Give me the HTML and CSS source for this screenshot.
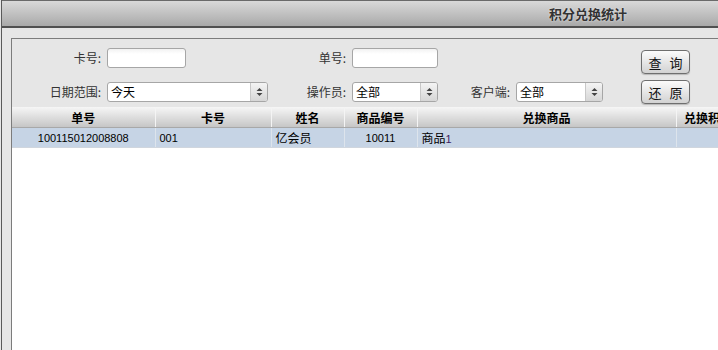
FILE: index.html
```html
<!DOCTYPE html>
<html lang="zh-CN">
<head>
    <meta charset="UTF-8">
    <title>积分兑换统计</title>
    <link rel="stylesheet" href="styles.css">
</head>
<body>
    <div class="window">
        <div class="titlebar">积分兑换统计</div>
        <div class="panel">
            <div class="search">
                <div class="fields">
                    <div class="row">
                        <label class="lbl lbl-card">卡号:</label>
                        <input type="text" class="txt txt-card">
                        <label class="lbl lbl-order">单号:</label>
                        <input type="text" class="txt txt-order">
                    </div>
                    <div class="row row-2">
                        <label class="lbl lbl-card">日期范围:</label>
                        <div class="select sel-date"><span>今天</span><span class="arrow"><svg width="7" height="10" viewBox="0 0 7 10"><path d="M3.5 1 L6.5 4 L0.5 4 Z M0.5 6 L6.5 6 L3.5 9 Z" fill="#444"/></svg></span></div>
                        <label class="lbl lbl-oper">操作员:</label>
                        <div class="select sel-oper"><span>全部</span><span class="arrow"><svg width="7" height="10" viewBox="0 0 7 10"><path d="M3.5 1 L6.5 4 L0.5 4 Z M0.5 6 L6.5 6 L3.5 9 Z" fill="#444"/></svg></span></div>
                        <label class="lbl lbl-client">客户端:</label>
                        <div class="select sel-client"><span>全部</span><span class="arrow"><svg width="7" height="10" viewBox="0 0 7 10"><path d="M3.5 1 L6.5 4 L0.5 4 Z M0.5 6 L6.5 6 L3.5 9 Z" fill="#444"/></svg></span></div>
                    </div>
                </div>
                <div class="buttons">
                    <button class="btn">查 询</button>
                    <button class="btn">还 原</button>
                </div>
            </div>
            <table class="grid">
                <colgroup>
                    <col class="c1"><col class="c2"><col class="c3"><col class="c4"><col class="c5"><col class="c6">
                </colgroup>
                <thead>
                    <tr>
                        <th>单号</th>
                        <th>卡号</th>
                        <th>姓名</th>
                        <th>商品编号</th>
                        <th>兑换商品</th>
                        <th>兑换积分</th>
                        <th></th>
                    </tr>
                </thead>
                <tbody>
                    <tr class="selected">
                        <td class="num center">100115012008808</td>
                        <td class="num">001</td>
                        <td>亿会员</td>
                        <td class="num center code">10011</td>
                        <td>商品<span class="code num">1</span></td>
                        <td></td>
                        <td></td>
                    </tr>
                </tbody>
            </table>
        </div>
    </div>
</body>
</html>
```

FILE: styles.css
```css
body {
    margin: 0;
    overflow: hidden;
    height: 350px;
    background-color: #e6e6e6;
    font-family: "Noto Sans CJK SC", "Liberation Sans", sans-serif;
    font-size: 12px;
    color: #222;
}
.window {
    width: 1172px;
    height: 350px;
    margin-left: 1px;
    border-left: 1px solid #5a5a5a;
    background-color: #e6e6e6;
}
.titlebar {
    height: 25px;
    line-height: 25px;
    border-top: 1px solid #6a6a6a;
    border-bottom: 2px solid #505050;
    background: linear-gradient(#d9d9d9, #a9a9a9);
    text-align: center;
    font-weight: bold;
    font-size: 13px;
    color: #333;
    text-shadow: 0 0 2px #eee;
}
.panel {
    margin: 10px 0 0 9px;
    width: 1150px;
    height: 312px;
    border: 1px solid #7c7c7c;
    border-bottom: none;
    background-color: #fff;
}
.search {
    display: flex;
    height: 68px;
    background-color: #e6e6e6;
    box-sizing: border-box;
    padding-top: 9px;
}
.fields {
    width: 629px;
}
.row {
    display: flex;
    align-items: center;
    height: 20px;
}
.row-2 {
    margin-top: 14px;
}
.lbl {
    box-sizing: border-box;
    text-align: right;
    padding-right: 6px;
    color: #333;
    line-height: 20px;
}
.lbl-card { width: 95px; }
.lbl-order { width: 166px; }
.lbl-oper { width: 84px; }
.lbl-client { width: 78px; }
.txt {
    box-sizing: border-box;
    height: 20px;
    margin: 0;
    padding: 0 3px;
    border: 1px solid #a6a6a6;
    border-radius: 3px;
    background: linear-gradient(#f2f2f2, #fff 5px);
    font: inherit;
}
.txt-card { width: 79px; }
.txt-order { width: 86px; }
.select {
    box-sizing: border-box;
    display: flex;
    height: 20px;
    border: 1px solid #a6a6a6;
    border-radius: 3px;
    background-color: #fff;
    line-height: 18px;
    color: #000;
    overflow: hidden;
}
.select span:first-child {
    flex: 1;
    padding-left: 3px;
}
.select .arrow {
    display: flex;
    align-items: center;
    justify-content: center;
    width: 16px;
    border-left: 1px solid #c8c8c8;
    background: linear-gradient(#f4f4f4, #d6d6d6);
}
.sel-date { width: 161px; }
.sel-oper { width: 86px; }
.sel-client { width: 87px; }
.buttons {
    display: flex;
    flex-direction: column;
    gap: 6px;
    padding-top: 2px;
}
.btn {
    width: 49px;
    height: 24px;
    padding: 0;
    border: 1px solid #6e6e6e;
    border-radius: 4px;
    background: linear-gradient(#fbfbfb, #d2d2d2);
    font-family: "Noto Sans CJK SC", sans-serif;
    font-size: 13px;
    word-spacing: 5px;
    color: #111;
    box-shadow: 0 1px 1px rgba(0, 0, 0, 0.2);
}
.grid {
    border-collapse: collapse;
    table-layout: fixed;
    width: 1150px;
}
.c1 { width: 143px; }
.c2 { width: 116px; }
.c3 { width: 73px; }
.c4 { width: 73px; }
.c5 { width: 259px; }
.c6 { width: 64px; }
.grid th {
    height: 20px;
    padding: 0;
    border-right: 1px solid #f4f4f4;
    border-bottom: 1px solid #a8a8a8;
    background: linear-gradient(#f6f6f6, #c6c6c6);
    font-weight: bold;
    font-size: 12px;
    color: #000;
    text-align: center;
    white-space: nowrap;
    overflow: hidden;
}
.grid td {
    height: 19px;
    padding: 0 4px;
    border-right: 1px solid #dde4ec;
    border-bottom: 1px solid #d0d6de;
    color: #000;
    white-space: nowrap;
    overflow: hidden;
}
.selected td {
    background-color: #c6d4e5;
}
.num {
    font-family: "Liberation Sans", sans-serif;
    font-size: 11px;
}
.center {
    text-align: center;
}
.code {
    color: #3a1a62;
}
```
